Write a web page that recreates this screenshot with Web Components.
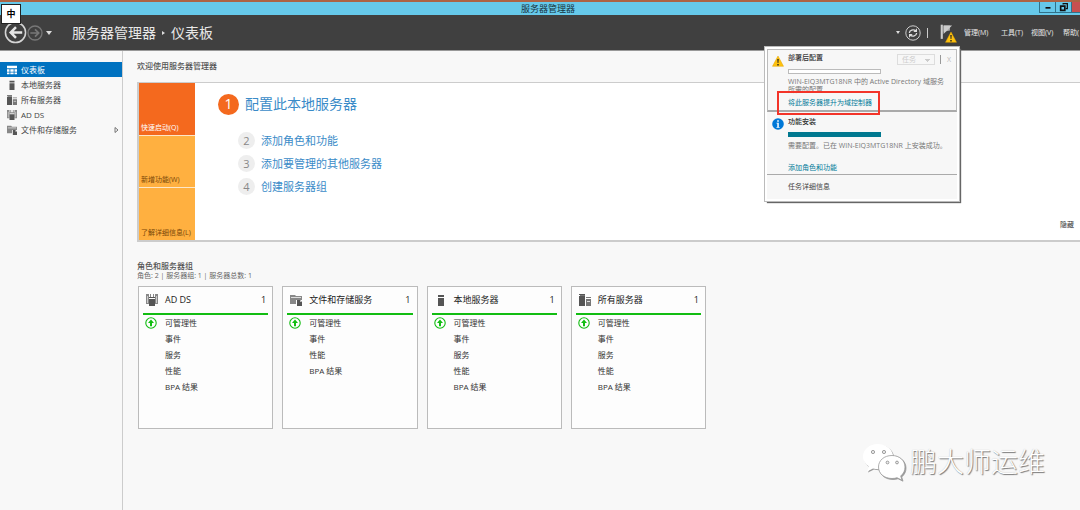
<!DOCTYPE html>
<html lang="zh-CN">
<head>
<meta charset="utf-8">
<title>服务器管理器</title>
<style>
html,body{margin:0;height:100%}
body{font-family:"Open Sans","Noto Sans CJK SC",sans-serif;color:#333;background:#f8f8f8;overflow:hidden}
</style>
</head>
<body>
<server-manager></server-manager>
<script>
const define=(name,html,setup)=>customElements.define(name,class extends HTMLElement{
  constructor(){
    super();
    const t=document.createElement('template');
    t.innerHTML=typeof html==='function'?html(this):html;
    this.attachShadow({mode:'open'}).append(t.content.cloneNode(true));
    if(setup)setup(this);
  }
});
const attr=(el,n,d='')=>el.getAttribute(n)??d;

const icons={
  dashboard:'<path fill="#fff" d="M0 1h12v3H0zM0 5h3v3H0zM4 5h4v3H4zM9 5h3v3H9zM0 9h3v2H0zM4 9h4v2H4zM9 9h3v2H9z"/>',
  server:'<path fill="#555" d="M3 1h6v2H3zM3 4h6v8H3z"/>',
  servers:'<path fill="#555" d="M0 0h6v1H0zM0 2h6v10H0z"/><path fill="#777" d="M7 3h5v1H7zM7 5h5v7H7zM1 1h5v1H1z"/><path fill="#ddd" d="M8 7h3v1H8z"/>',
  adds:'<path fill="#888" d="M0 0h3v10H0zM9 0h3v10H9zM4 0h1v3H4zM7 0h1v3H7z"/><path fill="#ccc" d="M1 2h1v7H1zM10 2h1v7h-1z"/><path fill="#555" d="M3 3h6v1H3zM3 5h6v7H3z"/>',
  files:'<path fill="#888" d="M0 1h5l1 1h6v4H6v4H0z"/><path fill="#ddd" d="M1 3h10v1H1z"/><path fill="#555" d="M7 6h3l2 2v4H7z"/><path fill="#bbb" d="M10 6v2h2z"/>',
  up:'<circle cx="6" cy="6" r="5.2" fill="#fff" stroke="#12bd12" stroke-width="1.1"/><path fill="#12bd12" d="M6 2.5 9 6H7v3.3H5V6H3z"/>',
  warn:'<path fill="#ffc20e" stroke="#e3a400" stroke-width=".5" stroke-linejoin="round" d="M6 1 11.5 11.3H.5z"/><path fill="#222" d="M5.3 4h1.4l-.3 4h-.8zM5.3 9h1.4v1.4H5.3z"/>',
  info:'<circle cx="6" cy="6" r="5.8" fill="#0078d7"/><path fill="#fff" d="M5.2 2.2h1.6v1.5H5.2zM4.5 4.7h2.3V9h.8v.8H4.5V9h.8V5.5h-.8z"/>',
  back:'<circle cx="12" cy="12" r="10.5" fill="none" stroke="#d5d5d5" stroke-width="1.6"/><path fill="none" stroke="#e6e6e6" stroke-width="2.6" d="M19 12H7M12.500 6.500 7 12l5.500 5.500"/>',
  forward:'<circle cx="12" cy="12" r="10.500" fill="none" stroke="#777" stroke-width="2"/><path fill="none" stroke="#777" stroke-width="2.600" d="M5 12h12M12 6.500 17.500 12 12 17.500"/>',
  refresh:'<circle cx="12" cy="12" r="10.800" fill="none" stroke="#ccc" stroke-width="1.500"/><path fill="none" stroke="#ddd" stroke-width="2" d="M6.500 12a5.500 5 0 0 1 9.500-3M17.500 12a5.500 5 0 0 1-9.500 3"/><path fill="#ddd" d="M18 5v5.500h-5.500zM6 19v-5.500h5.500z"/>',
  flag:'<path fill="#ccc" d="M1 1h3v20H1z"/><path fill="#aaa" d="M5 2h9v7L5 11z"/><path fill="#ccc" d="M5 2h12L5 14z"/>',
  min:'<path fill="#111" d="M3 6h6v2H3z"/>',
  restore:'<path fill="none" stroke="#111" stroke-width="2" d="M2 5h5v5H2z"/><path fill="none" stroke="#111" stroke-width="1.500" d="M5 3V2h5v6H8"/>'
};
define('ui-icon',el=>{
  const n=attr(el,'name'),big=['back','forward','refresh','flag'].includes(n);
  return `<style>:host{display:block;flex:none;width:var(--size,12px);height:var(--size,12px)}svg{display:block;width:100%;height:100%}</style>
  <svg viewBox="0 0 ${big?'24 24':'12 12'}" aria-hidden="true">${icons[n]}</svg>`;
});

define('title-bar',`<style>
:host{display:grid;grid-template-columns:1fr auto 1fr;height:13px;border-top:2px solid #ad6344;background:#66c9ea;color:#16333d}
h1{grid-column:2;margin:0;font-size:9px;line-height:13px;font-weight:400;padding-left:16px}
div{display:flex;justify-content:flex-end}
button{box-sizing:border-box;width:16px;height:11px;padding:0;border:1px solid #31728a;border-top:0;border-right:0;background:none;display:flex;align-items:center;justify-content:center}
.close{width:9px;background:#c75050}
ui-icon{--size:10px}
</style><h1><slot></slot></h1><div><button aria-label="最小化"><ui-icon name="min"></ui-icon></button><button aria-label="还原"><ui-icon name="restore"></ui-icon></button><button class="close" aria-label="关闭"></button></div>`);

define('input-badge',`<style>:host{position:absolute;left:1px;top:4px;z-index:5;box-sizing:border-box;width:20px;height:20px;border:1px solid #222;background:#fff;color:#000;font-size:9px;font-weight:700;line-height:18px;text-align:center}</style><slot></slot>`);

define('nav-header',`<style>
:host{display:flex;align-items:center;position:relative;z-index:2;height:35px;background:#404040;color:#e8e8e8;border-bottom:1px solid #999;padding-left:4px}
button{padding:0;border:0;background:none;color:inherit;font:inherit;display:block;text-align:left;white-space:nowrap}
.back{--size:23px}.fwd{--size:16px}
.drop{width:0;height:0;border:3px solid transparent;border-top:4px solid #ddd;border-bottom:0}
.fwd+.drop{margin:0 20px 0 3px}
.small{border-width:3px 2px 0;margin-right:5px}
.crumb{display:flex;align-items:center;gap:5px;font-size:14px;line-height:20px}
.sep{border:2px solid transparent;border-left:3px solid #ddd;border-right:0;margin:0 1px}
.tools{display:flex;align-items:center;margin-left:auto}
.refresh{--size:16px}
.bar{width:1px;height:10px;background:#ccc;margin:0 12px 0 6px}
.flag{position:relative;--size:17px;margin-right:7px}
.flag .w{--size:12px;position:absolute;left:5px;top:7px}
nav{display:flex;gap:8px;font-size:7px;line-height:10px}
nav button{width:22px}nav button:first-child{width:29px}nav button:nth-child(3){width:24px}nav button:last-child{width:17px}
</style>
<button class="back" aria-label="后退"><ui-icon name="back"></ui-icon></button><button class="fwd" aria-label="前进"><ui-icon name="forward"></ui-icon></button><button class="drop" aria-label="历史记录"></button>
<div class="crumb"><span>服务器管理器</span><span class="sep"></span><span>仪表板</span></div>
<div class="tools"><button class="drop small" aria-label="刷新选项"></button><button class="refresh" aria-label="刷新"><ui-icon name="refresh"></ui-icon></button><span class="bar"></span>
<button class="flag" aria-label="通知"><ui-icon name="flag"></ui-icon><ui-icon class="w" name="warn"></ui-icon></button>
<nav><button>管理(M)</button><button>工具(T)</button><button>视图(V)</button><button>帮助(</button></nav></div>
<slot></slot>`);

define('side-item',el=>`<style>
:host{display:block}
a{display:flex;align-items:center;gap:4px;height:15px;padding:0 3px 0 7px;font-size:8px;line-height:15px;text-decoration:none;color:#444}
:host([selected]) a{background:#0072c0;color:#fff}
ui-icon{--size:10px}
i{margin-left:auto;width:5px;height:6px}svg{display:block}
</style><a href="#"><ui-icon name="${attr(el,'icon')}"></ui-icon><span><slot></slot></span>${el.hasAttribute('more')?'<i><svg width="5" height="6" viewBox="0 0 5 6"><path d="M1 .5 4 3 1 5.500z" fill="none" stroke="#555" stroke-width=".8"/></svg></i>':''}</a>`);

define('side-nav',`<style>:host{display:block;flex:none;box-sizing:border-box;width:123px;padding-top:11px;border-right:1px solid #ccc}nav{display:block}</style><nav><slot></slot></nav>`);

define('step-link',el=>`<style>
:host{display:flex;align-items:center;gap:6px;height:23px;margin-left:20px;font-size:11px}
b{display:block;width:17px;height:17px;border-radius:50%;background:#eee;color:#888;font-weight:400;line-height:17px;text-align:center}
a{color:#3a8bc8;text-decoration:none;line-height:20px}
:host([main]){height:22px;margin:0 0 14px;font-size:14px}
:host([main]) b{width:21px;height:21px;line-height:20px;background:#f4691e;color:#fff}
</style><b>${attr(el,'n')}</b><a href="#"><slot></slot></a>`);

define('welcome-panel',`<style>
:host{display:flex;box-sizing:border-box;min-height:160px;border:2px solid #ccc;border-right:0;border-top-width:1px;background:#fff;position:relative}
.tiles{display:grid;grid-template-rows:repeat(3,1fr);gap:1px;width:56px;background:#fde6c8}
button{border:0;padding:0 0 2px 2px;margin:0;background:#ffb040;color:#7a4708;font:inherit;font-size:7px;line-height:10px;display:flex;align-items:flex-end;white-space:nowrap}
button:first-child{background:#f4691e;color:#fff}
.steps{flex:1;padding:10px 0 0 23px}
.hide{align-self:flex-end;margin:0 6px 10px 0;font-size:7px;line-height:10px;color:#333;text-decoration:none}
</style><div class="tiles"><button>快速启动(Q)</button><button>新增功能(W)</button><button>了解详细信息(L)</button></div><div class="steps"><slot></slot></div><a class="hide" href="#">隐藏</a>`);

define('group-card',el=>`<style>
:host{display:block;box-sizing:border-box;min-height:143px;border:1px solid #bbb;background:#fdfdfd;padding:0 4px}
header{display:flex;align-items:center;height:26px;padding:0 2px 0 3px;gap:7px;border-bottom:2px solid #12bd12;color:#222}
h3{margin:0;font-size:9px;line-height:14px;font-weight:400;flex:1}
header span{font-size:9px}
ul{list-style:none;margin:0;padding:0 0 0 2px;font-size:8px;line-height:16px}
li{display:grid;grid-template-columns:12px 1fr;column-gap:8px;align-items:center;height:16px}
li span{grid-column:2}
</style><header><ui-icon name="${attr(el,'icon')}"></ui-icon><h3>${attr(el,'name')}</h3><span>1</span></header>
<ul>${attr(el,'rows').split(',').map((r,i)=>`<li>${i?'':'<ui-icon name="up"></ui-icon>'}<span>${r}</span></li>`).join('')}</ul>`);

define('notice-popup',`<style>
:host{position:absolute;right:121px;top:32px;box-sizing:border-box;width:194px;height:154px;border:2px solid #fff;outline:1px solid #bbb;background:#f7f7f7;box-shadow:2px 2px 1px #666;color:#777;font-size:7px;line-height:8px}
section{display:grid;grid-template-columns:12px 1fr;column-gap:4px;padding-left:5px}
.first{box-sizing:border-box;height:63px;border:1px solid #bbb;border-bottom:2px solid #aaa;padding:4px 4px 0}
ui-icon{margin-top:1px}
.head{display:flex;align-items:center;height:11px}
h2{margin:0;flex:1;font-size:7px;line-height:8px;font-weight:500;color:#333}
.head h2{align-self:flex-start}
select{appearance:none;box-sizing:border-box;width:38px;height:11px;border:1px solid #ddd;border-radius:0;background:linear-gradient(#ccc,#ccc) 27px 4px/5px 1px no-repeat,linear-gradient(#ccc,#ccc) 28px 5px/3px 1px no-repeat,linear-gradient(#ccc,#ccc) 29px 6px/1px 1px no-repeat;color:#ccc;opacity:1;padding:0 0 0 4px;font:inherit}
.line{width:1px;height:9px;background:#999;margin:0 5px}
button{border:0;padding:0;background:none;color:#bbb;font:inherit;width:6px}
progress{appearance:none;display:block;width:93px;height:5px;box-sizing:border-box;border:1px solid #bbb;background:#fff}
progress::-webkit-progress-bar{background:#fff}
progress::-webkit-progress-value{background:#00788f}
.first progress{margin:4px 0}
p{margin:0;white-space:nowrap}
a{color:#007a99;text-decoration:none}
.mark{position:relative;display:block;line-height:10px;margin-top:4px}
.mark::after{content:"";position:absolute;left:-11px;top:-7px;width:99px;height:20px;border:2px solid #f33429}
.second{box-sizing:border-box;padding-top:6px;height:63px;border-bottom:1px solid #aaa}
.second progress{border-color:#00788f;margin:6px 0 5px}
.second ui-icon{margin-top:0}
.second a{display:block;line-height:10px;margin-top:13px}
.details{display:block;margin:8px 0 0 21px;color:#444}
</style>
<section class="first"><ui-icon name="warn"></ui-icon><div><div class="head"><h2>部署后配置</h2><select disabled aria-label="任务"><option>任务</option></select><span class="line"></span><button aria-label="关闭">X</button></div>
<progress max="1" value="0" aria-label="部署进度"></progress><p>WIN-EIQ3MTG18NR 中的 Active Directory 域服务<br>所需的配置</p><a class="mark" href="#">将此服务器提升为域控制器</a></div></section>
<section class="second"><ui-icon name="info"></ui-icon><div><h2>功能安装</h2><progress max="1" value="1" aria-label="安装进度"></progress><p>需要配置。已在 WIN-EIQ3MTG18NR 上安装成功。</p><a href="#">添加角色和功能</a></div></section>
<a class="details" href="#">任务详细信息</a>`);

define('water-mark',`<style>
:host{position:absolute;right:35px;bottom:28px;display:flex;align-items:center;gap:4px;color:#fff;font-size:27px;line-height:40px;text-shadow:1px 1px 1px #777,0 0 1px #bbb;font-weight:300}
svg{display:block;filter:drop-shadow(1px 1px 0 #999)}
</style><svg width="44" height="38" viewBox="0 0 44 38" aria-hidden="true"><path fill="#fff" d="M16 1C7.500 1 1 6.500 1 13.500c0 4 2 7.500 6 10L5 28.500l6-3q4 1 8 .5C32 24 32 16 31 12 29.500 5 23 1 16 1z"/><path fill="#fff" stroke="#999" stroke-width=".8" d="M30 12.500c-8 0-13.500 5-13.500 11.500S22 35.500 30 35.500q3 0 5-.8l5 2.500-1.300-4.200c3-2.500 4.300-5.500 4.300-9 0-6.500-5.500-11.500-13-11.500z"/><g fill="#eee" stroke="#888" stroke-width=".8"><circle cx="11" cy="9" r="1.600"/><circle cx="22" cy="9" r="1.600"/><circle cx="25.500" cy="19.500" r="1.400"/><circle cx="35" cy="19.500" r="1.400"/></g></svg><span><slot></slot></span>`);

define('dash-board',`<style>
:host{display:block;flex:1;min-width:0;padding:9px 0 0 14px;font-size:8px;line-height:12px}
h2{margin:0;font-size:8px;line-height:12px;font-weight:500;color:#555}
welcome-panel{margin:10px 0 18px}
p{margin:0;font-size:7px;line-height:8px;color:#666}
.cards{display:grid;grid-template-columns:repeat(4,1fr);max-width:568px;gap:9px;margin:6px 0 0 1px}
</style><h2>欢迎使用服务器管理器</h2>
<welcome-panel><step-link main n="1">配置此本地服务器</step-link><step-link n="2">添加角色和功能</step-link><step-link n="3">添加要管理的其他服务器</step-link><step-link n="4">创建服务器组</step-link></welcome-panel>
<h2>角色和服务器组</h2><p>角色: 2 | 服务器组: 1 | 服务器总数: 1</p>
<div class="cards"><group-card icon="adds" name="AD DS" rows="可管理性,事件,服务,性能,BPA 结果"></group-card><group-card icon="files" name="文件和存储服务" rows="可管理性,事件,性能,BPA 结果"></group-card><group-card icon="server" name="本地服务器" rows="可管理性,事件,服务,性能,BPA 结果"></group-card><group-card icon="servers" name="所有服务器" rows="可管理性,事件,服务,性能,BPA 结果"></group-card></div>`);

define('server-manager',`<style>
:host{display:flex;flex-direction:column;min-height:100%;position:relative;overflow:hidden}
main{display:flex;flex:1}
</style>
<title-bar>服务器管理器</title-bar><input-badge>中</input-badge>
<nav-header><notice-popup></notice-popup></nav-header>
<main><side-nav><side-item selected icon="dashboard">仪表板</side-item><side-item icon="server">本地服务器</side-item><side-item icon="servers">所有服务器</side-item><side-item icon="adds">AD DS</side-item><side-item icon="files" more>文件和存储服务</side-item></side-nav><dash-board></dash-board></main>
<water-mark>鹏大师运维</water-mark>`);
</script>
</body>
</html>
